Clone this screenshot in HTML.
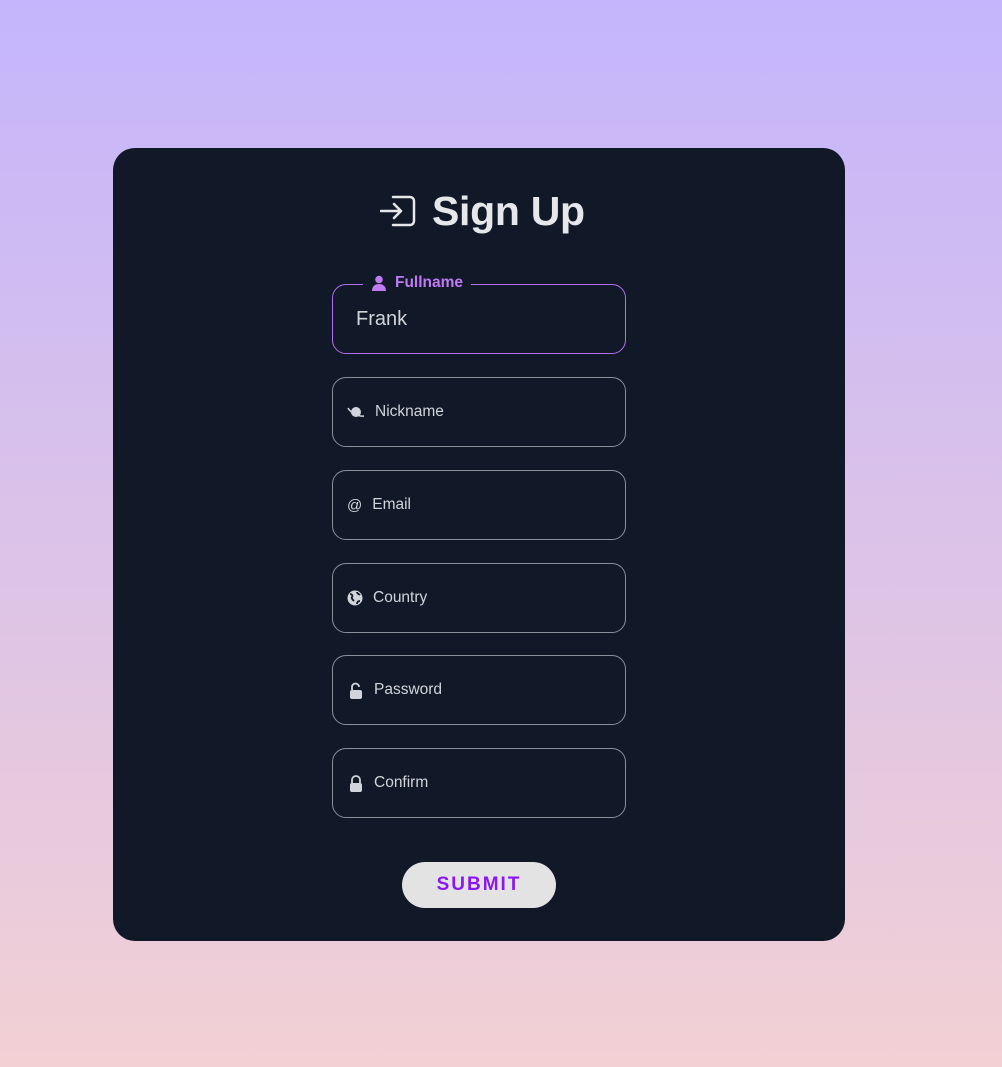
<!DOCTYPE html>
<html><head><meta charset="utf-8"><style>
*{box-sizing:border-box;margin:0;padding:0}
body{width:1002px;height:1067px;background:linear-gradient(#c4b5fc,#f2d0d4);font-family:"Liberation Sans",sans-serif;position:relative;overflow:hidden}
.card{position:absolute;left:113px;top:148px;width:732px;height:793px;background:#111827;border-radius:22px}
h1{position:absolute;left:432px;top:188px;font-size:41px;font-weight:bold;color:#e5e7eb;letter-spacing:-0.3px}
.ico{position:absolute;left:380px;top:194px}
.f{position:absolute;left:332px;width:294px;height:70px;border:1px solid #8a8f99;border-radius:14px}
.f .lab{position:absolute;left:14px;top:25px;font-size:15.5px;color:#d1d5db;display:flex;align-items:center}
.f .lab svg{margin-right:10px}
.full{border-color:#b46ef0}
.leg{position:absolute;left:30px;top:-11px;background:#111827;padding:0 8px;color:#c07af4;font-weight:bold;font-size:15.5px;display:flex;align-items:center}
.btn{position:absolute;left:402px;top:862px;width:154px;height:46px;border-radius:23px;background:#e3e3e3;color:#8b16f5;font-weight:bold;font-size:19px;letter-spacing:2px;text-align:center;line-height:46px}
</style></head><body>
<div class="card"></div>
<svg class="ico" width="36" height="34" viewBox="0 0 36 34" fill="none" stroke="#e5e7eb" stroke-width="2.5" stroke-linecap="round" stroke-linejoin="round"><path d="M1 17h20M14 10l7 7-7 7"/><path d="M13 3h17a4 4 0 0 1 4 4v20a4 4 0 0 1-4 4H13"/></svg>
<h1>Sign Up</h1>
<div class="f full" style="top:284px"><div class="leg"><svg width="16" height="16" viewBox="0 0 16 16" style="margin-right:8px" fill="#c07af4"><circle cx="8" cy="4.5" r="3.8"/><path d="M1 16c0-5 3-7 7-7s7 2 7 7z"/></svg>Fullname</div><div style="position:absolute;left:23px;top:23px;font-size:20px;color:#d1d5db">Frank</div></div>
<div class="f" style="top:377px"><div class="lab"><svg width="18" height="14" viewBox="0 0 18 14" fill="#d1d5db"><circle cx="9" cy="7" r="5"/><path d="M1 3c2 4 10 9 16 8" stroke="#d1d5db" stroke-width="1.5" fill="none"/></svg>Nickname</div></div>
<div class="f" style="top:470px"><div class="lab"><span style="margin-right:10px;font-size:15px">@</span>Email</div></div>
<div class="f" style="top:563px"><div class="lab"><svg width="16" height="16" viewBox="0 0 16 16"><circle cx="8" cy="8" r="7.5" fill="#d1d5db"/><path d="M3 4c2 0 3 2 2 3s1 3 2 4M10 2c0 2 2 2 3 3M10 14c0-2 1-3 3-3" stroke="#111827" stroke-width="1.8" fill="none"/></svg>Country</div></div>
<div class="f" style="top:655px"><div class="lab"><svg width="16" height="17" viewBox="0 0 16 17" style="margin-left:1px"><path d="M4 8V5a3.5 3.5 0 0 1 7 0" stroke="#d1d5db" stroke-width="1.8" fill="none"/><rect x="2" y="8" width="12" height="9" rx="2" fill="#d1d5db"/></svg>Password</div></div>
<div class="f" style="top:748px"><div class="lab"><svg width="16" height="17" viewBox="0 0 16 17" style="margin-left:1px"><path d="M4 8V5a4 4 0 0 1 8 0v3" stroke="#d1d5db" stroke-width="1.8" fill="none"/><rect x="2" y="8" width="12" height="9" rx="2" fill="#d1d5db"/></svg>Confirm</div></div>
<div class="btn">SUBMIT</div>
</body></html>
